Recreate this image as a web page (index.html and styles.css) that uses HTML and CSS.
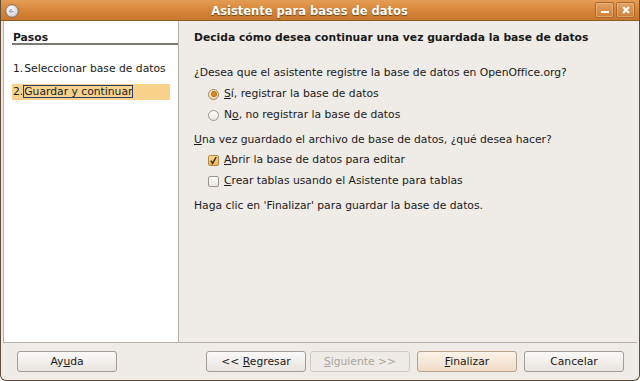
FILE: index.html
```html
<!DOCTYPE html>
<html lang="es">
<head>
<meta charset="utf-8">
<title>Asistente para bases de datos</title>
<link rel="stylesheet" href="styles.css">
</head>
<body>
<div class="window">
  <div class="titlebar">
    <div class="app-icon">
      <svg width="14" height="14" viewBox="0 0 14 14">
        <defs>
          <radialGradient id="ig" cx="0.4" cy="0.35" r="0.7">
            <stop offset="0" stop-color="#ffffff"/>
            <stop offset="1" stop-color="#c9ccd2"/>
          </radialGradient>
        </defs>
        <circle cx="7" cy="7" r="6.3" fill="url(#ig)" stroke="#6b5a48" stroke-width="0.8"/>
        <path d="M3.5 6 L7 5.4 L6.2 6.6 Z" fill="#2b2b2b"/>
        <path d="M4 7.6 Q6 8.4 8.5 7.4" stroke="#6d6d6d" stroke-width="0.8" fill="none"/>
      </svg>
    </div>
    <div class="title">Asistente para bases de datos</div>
    <div class="wm-buttons">
      <div class="wm-btn"><svg width="10" height="10" viewBox="0 0 10 10"><rect x="1" y="6" width="8" height="2" fill="#fff"/></svg></div>
      <div class="wm-btn"><svg width="10" height="10" viewBox="0 0 10 10"><path d="M2 2 L8 8 M8 2 L2 8" stroke="#fff" stroke-width="2.2"/></svg></div>
    </div>
  </div>
  <div class="content">
    <div class="steps">
      <div class="steps-head">Pasos</div>
      <div class="step">1.<span class="label">Seleccionar base de datos</span></div>
      <div class="step active">2.<span class="label focus">Guardar y continuar</span></div>
    </div>
    <div class="page">
      <div class="page-title">Decida cómo desea continuar una vez guardada la base de datos</div>
      <div class="row q1">¿Desea que el asistente registre la base de datos en OpenOffice.org?</div>
      <div class="row opt r1"><span class="radio checked"></span><span class="opt-label"><u>S</u>í, registrar la base de datos</span></div>
      <div class="row opt r2"><span class="radio"></span><span class="opt-label">N<u>o</u>, no registrar la base de datos</span></div>
      <div class="row q2"><u>U</u>na vez guardado el archivo de base de datos, ¿qué desea hacer?</div>
      <div class="row opt c1"><span class="check checked"><svg width="9" height="9" viewBox="0 0 9 9"><path d="M1.8 4.6 L3.6 7.4 L7.2 1" stroke="#2a2a2a" stroke-width="1.5" fill="none"/></svg></span><span class="opt-label"><u>A</u>brir la base de datos para editar</span></div>
      <div class="row opt c2"><span class="check"></span><span class="opt-label"><u>C</u>rear tablas usando el Asistente para tablas</span></div>
      <div class="row note">Haga clic en 'Finalizar' para guardar la base de datos.</div>
    </div>
  </div>
  <div class="buttons">
    <div class="btn">Ay<u>u</u>da</div>
    <div class="nav">
      <div class="btn">&lt;&lt; <u>R</u>egresar</div>
      <div class="btn disabled"><u>S</u>iguiente &gt;&gt;</div>
      <div class="btn default"><u>F</u>inalizar</div>
      <div class="btn">Cancelar</div>
    </div>
  </div>
</div>
</body>
</html>
```

FILE: styles.css
```css
* { box-sizing: border-box; }
html, body { margin: 0; padding: 0; }
body {
  width: 640px;
  height: 381px;
  overflow: hidden;
  background: #ffffff;
  font-family: "DejaVu Sans", "Liberation Sans", sans-serif;
  font-size: 10.75px;
  color: #1a1a1a;
}
.window {
  width: 640px;
  height: 381px;
  display: flex;
  flex-direction: column;
  background: #efebe7;
  border: 1px solid #5f4b37;
  border-top: none;
  border-radius: 0 0 6px 6px;
  overflow: hidden;
}
.titlebar {
  height: 21px;
  flex: none;
  display: flex;
  align-items: center;
  background: linear-gradient(#e49d55 0%, #d8883c 45%, #c9772c 100%);
  border-bottom: 1px solid #8c5a25;
  padding: 0 4px 0 3px;
}
.app-icon { width: 16px; height: 16px; display: flex; align-items: center; justify-content: center; margin-top: 1px; }
.title {
  flex: 1;
  text-align: center;
  color: #ffffff;
  font-weight: bold;
  font-size: 11.5px;
  text-shadow: 0 1px 1px #6e3f10;
  padding-left: 4px;
  margin-top: 1px;
}
.wm-buttons { display: flex; gap: 2px; }
.wm-btn {
  width: 19px;
  height: 16px;
  border: 1px solid #a9692b;
  border-radius: 2px;
  background: linear-gradient(#e2a060, #cf8238);
  box-shadow: inset 0 0 0 1px rgba(255,220,170,0.35);
  display: flex;
  align-items: center;
  justify-content: center;
}
.content {
  height: 322px;
  flex: none;
  display: flex;
  margin: 0 2px;
  border-bottom: 1px solid #b5b0aa;
}
.steps {
  width: 176px;
  flex: none;
  background: #ffffff;
  border-left: 1px solid #b5b0aa;
  border-right: 1px solid #b5b0aa;
  padding: 9px 0 0 8px;
}
.steps-head {
  font-weight: bold;
  line-height: 16px;
  padding-left: 1px;
  border-bottom: 2px solid #7d7a76;
  height: 15px;
  margin-bottom: 16px;
}
.step {
  line-height: 16px;
  height: 16px;
  width: 158px;
  padding-left: 1px;
  margin-bottom: 7px;
  white-space: nowrap;
}
.step .label { padding-left: 1px; }
.step.active { background: #f9d38c; }
.focus { outline: 1px solid #2b3d66; outline-offset: -1px; padding-right: 1px; }
.page {
  flex: 1;
  padding: 9px 0 0 15px;
}
.page-title { font-weight: bold; line-height: 16px; height: 16px; margin-bottom: 19px; }
.row { line-height: 16px; height: 16px; white-space: nowrap; display: flex; align-items: center; }
.q1 { margin-bottom: 5px; }
.r1 { margin-bottom: 5px; }
.r2 { margin-bottom: 9px; }
.q2 { margin-bottom: 4px; }
.c1 { margin-bottom: 5px; }
.c2 { margin-bottom: 9px; }
.opt { padding-left: 14px; }
.opt-label { margin-left: 5px; }
.radio {
  width: 11px; height: 11px;
  border-radius: 50%;
  border: 1px solid #9a958f;
  background: linear-gradient(#ffffff, #e9e5e0);
  display: flex; align-items: center; justify-content: center;
  flex: none;
}
.radio.checked { border-color: #a6804f; background: linear-gradient(#fff6ea, #efd7b6); }
.radio.checked::after {
  content: "";
  width: 4px; height: 4px; border-radius: 50%;
  background: #e08a22;
  box-shadow: 0 0 0 1px #c26e12;
}
.check {
  width: 11px; height: 11px;
  border: 1px solid #9a958f;
  border-radius: 2px;
  background: linear-gradient(#ffffff, #e9e5e0);
  flex: none;
  display: flex; align-items: center; justify-content: center;
}
.check.checked { border-color: #b58845; background: linear-gradient(#ffd88f, #f3b552); }
.buttons {
  flex: 1;
  display: flex;
  justify-content: space-between;
  align-items: flex-start;
  padding: 8px 15px 0 16px;
}
.nav { display: flex; gap: 7px; }
.nav .btn:first-child { margin-right: -3px; }
.btn {
  width: 100px;
  height: 21px;
  border: 1px solid #a19c96;
  border-radius: 3px;
  background: linear-gradient(#fbfaf9, #e8e4df);
  text-align: center;
  line-height: 19px;
  color: #1a1a1a;
}
.btn.disabled { color: #a8a49f; background: #efebe7; border-color: #cfcac4; }
.btn.default { background: linear-gradient(#fdf3e8, #efdcc7); border-color: #b9a089; }
u { text-decoration: underline; text-underline-offset: 1px; }
```
